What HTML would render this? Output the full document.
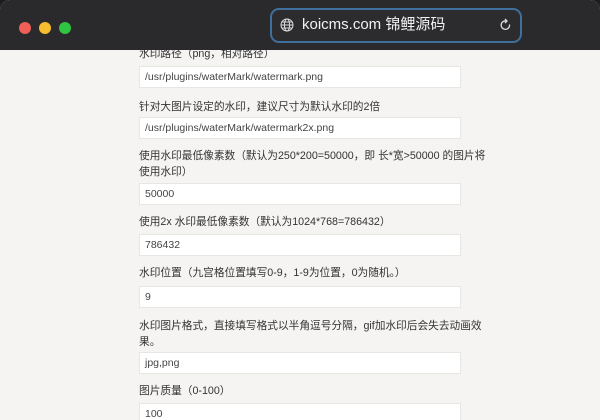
<!DOCTYPE html>
<html><head><meta charset="utf-8"><style>
*{margin:0;padding:0;box-sizing:border-box}
body{width:600px;height:420px;overflow:hidden;background:#1c1c1e;font-family:"Liberation Sans","Noto Sans CJK SC",sans-serif}
.win{position:absolute;left:0;top:0;width:600px;height:420px;background:#f5f4f2;border-radius:10px 10px 0 0;overflow:hidden}
.bar{position:absolute;left:0;top:0;width:600px;height:50px;background:#2a2a2c;z-index:2}
.dot{position:absolute;top:22px;width:12px;height:12px;border-radius:50%}
.addr{position:absolute;left:270px;top:8px;width:252px;height:35px;border:2.5px solid #3f6f9c;border-radius:9px;background:#2c2c2f;color:#f2f2f2;font-size:15px;line-height:30px;padding-left:30px}
.lbl{position:absolute;left:139px;font-size:10.7px;color:#333;line-height:16px;white-space:nowrap}
.inp{position:absolute;left:139px;width:322px;height:22px;background:#fff;border:1px solid #e8e6e3;font-size:10.5px;color:#444;line-height:20px;padding-left:5px}
</style></head><body><div class="win">
<div class="bar">
<div class="dot" style="left:19px;background:#ed5f57"></div>
<div class="dot" style="left:39px;background:#f5bd2f"></div>
<div class="dot" style="left:59px;background:#2fc441"></div>
<div class="addr">
<svg style="position:absolute;left:8px;top:8px" width="14" height="14" viewBox="0 0 14 14" fill="none" stroke="#ddd" stroke-width="1"><circle cx="7" cy="7" r="6"/><ellipse cx="7" cy="7" rx="2.6" ry="6"/><path d="M1 7h12M2 4h10M2 10h10"/></svg>
koicms.com 锦鲤源码
<svg style="position:absolute;right:8px;top:8px" width="13" height="14" viewBox="0 0 13 14" fill="none" stroke="#ddd" stroke-width="1.3"><path d="M10.5 6.5A4.2 4.2 0 1 1 7 3"/><path d="M6 1l2 2-2 2"/></svg>
</div></div>
<div class="lbl" style="top:46px">水印路径（png，相对路径）</div>
<div class="inp" style="top:66px">/usr/plugins/waterMark/watermark.png</div>
<div class="lbl" style="top:99px">针对大图片设定的水印，建议尺寸为默认水印的2倍</div>
<div class="inp" style="top:117px">/usr/plugins/waterMark/watermark2x.png</div>
<div class="lbl" style="top:148px">使用水印最低像素数（默认为250*200=50000，即 长*宽&gt;50000 的图片将<br>使用水印）</div>
<div class="inp" style="top:183px">50000</div>
<div class="lbl" style="top:214px">使用2x 水印最低像素数（默认为1024*768=786432）</div>
<div class="inp" style="top:234px">786432</div>
<div class="lbl" style="top:265px">水印位置（九宫格位置填写0-9，1-9为位置，0为随机。）</div>
<div class="inp" style="top:286px">9</div>
<div class="lbl" style="top:318px">水印图片格式，直接填写格式以半角逗号分隔，gif加水印后会失去动画效<br>果。</div>
<div class="inp" style="top:352px">jpg,png</div>
<div class="lbl" style="top:383px">图片质量（0-100）</div>
<div class="inp" style="top:403px">100</div>
</div></body></html>
